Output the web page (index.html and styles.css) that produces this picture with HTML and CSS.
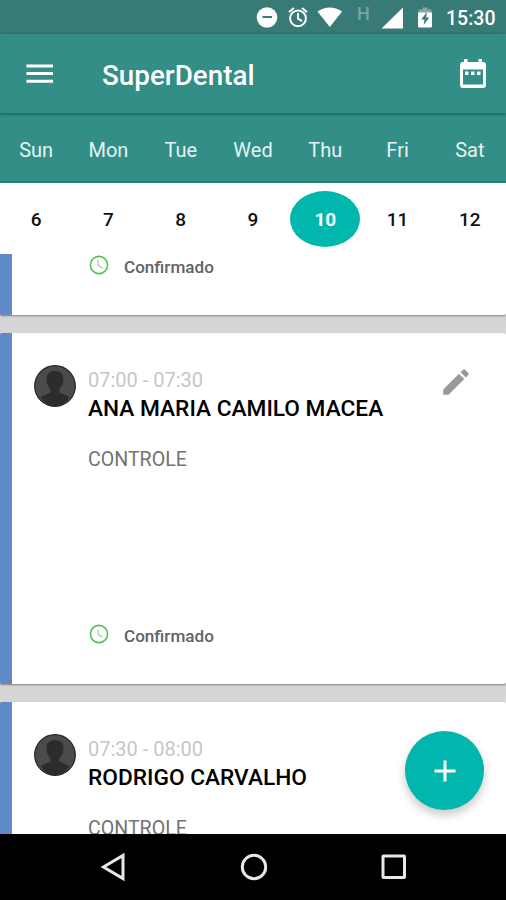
FILE: index.html
```html
<!DOCTYPE html>
<html lang="en">
<head>
<meta charset="utf-8">
<title>SuperDental</title>
<link rel="stylesheet" href="styles.css">
</head>
<body>
<div class="screen">
  <div class="status">
    <svg class="status-icons" width="180" height="34" viewBox="0 0 180 34">
      <circle cx="11" cy="17.500" r="10.300" fill="#fff"/>
      <path d="M6.500 17h9.500" stroke="#377a76" stroke-width="2"/>
      <g fill="none" stroke="#fff" stroke-width="2">
        <circle cx="42" cy="18.300" r="7.900"/>
        <path d="M42 13v5.600l4 2.600M33 12l5-4M51 12l-5-4"/>
      </g>
      <path d="M61.500 11.500Q73.800 3.500 86.100 11.500L73.800 27Z" fill="#fff"/>
      <path d="M147 28.500V7.500L125.500 28.500Z" fill="#fff"/>
      <path d="M166.500 7.500h5v2h4v4h-13v-4h4Z" fill="#83aaa8"/>
      <path d="M162 12.500h14v13.500q0 1.500-1.500 1.500h-11q-1.500 0-1.500-1.500Z" fill="#fff"/>
      <path d="M171 12l-5.800 7.500h3.300l-.8 5.500 5.600-7.500h-3.200Z" fill="#377a76"/>
    </svg>
    <span class="network">H</span>
    <span class="clock">15:30</span>
  </div>
  <header class="appbar">
    <svg class="menu" width="28" height="20" viewBox="0 0 28 20"><path d="M.5 2h26.500M.5 9.600h26.500M.5 17.200h26.500" stroke="#fff" stroke-width="3"/></svg>
    <h1 class="title">SuperDental</h1>
    <svg class="calendar" width="28" height="32" viewBox="0 0 28 32">
      <path fill="#fff" fill-rule="evenodd" d="M5 1h3.500v3h11V1H23v3h1q3 0 3 3v20q0 3-3 3H4q-3 0-3-3V7q0-3 3-3h1ZM4 11.500V26.500h20V11.500Z"/>
      <path fill="#fff" d="M6 13.500h3.500v3.500H6ZM12 13.500h3.500v3.500H12ZM18 13.500h3.500v3.500H18Z"/>
    </svg>
  </header>
  <div class="week days"><span>Sun</span><span>Mon</span><span>Tue</span><span>Wed</span><span>Thu</span><span>Fri</span><span>Sat</span></div>
  <div class="week dates"><span>6</span><span>7</span><span>8</span><span>9</span><span class="selected">10</span><span>11</span><span>12</span></div>
  <main class="list">
    <article class="card tail">
      <div class="state">
        <svg width="20" height="20" viewBox="0 0 20 20" fill="none" stroke="#55c05a"><circle cx="10" cy="10" r="8.600" stroke-width="1.600"/><path d="M9 5.200v5l4.500 3" stroke-width="1.200" stroke="#8fd292"/></svg>
        <span>Confirmado</span>
      </div>
    </article>
    <article class="card">
      <div class="row">
        <svg class="avatar" width="42" height="42" viewBox="0 0 42 42"><circle cx="21" cy="21" r="20.500" fill="#4b4b4b"/><path d="M21 6c5.500 0 8.500 3 8.500 8 0 5-1.500 7.500-4 10v3.500l10 4.500Q30 41 21 41T6.500 32l10-4.500V24c-2.500-2.500-4-5-4-10 0-5 3-8 8.500-8Z" fill="#2c2c2c"/><circle cx="21" cy="21" r="20.300" fill="none" stroke="#272727" stroke-width="1.200"/></svg>
        <div class="info">
          <div class="time">07:00 - 07:30</div>
          <div class="name">ANA MARIA CAMILO MACEA</div>
          <div class="kind">CONTROLE</div>
        </div>
        <svg class="edit" width="34" height="34" viewBox="0 0 24 24"><path fill="#999" d="M3 17.250V21h3.750L17.810 9.940l-3.750-3.750L3 17.250zM20.710 7.040a1 1 0 0 0 0-1.410l-2.340-2.340a1 1 0 0 0-1.410 0l-1.830 1.830 3.750 3.750 1.830-1.830z"/></svg>
      </div>
      <div class="state">
        <svg width="20" height="20" viewBox="0 0 20 20" fill="none" stroke="#55c05a"><circle cx="10" cy="10" r="8.600" stroke-width="1.600"/><path d="M9 5.200v5l4.500 3" stroke-width="1.200" stroke="#8fd292"/></svg>
        <span>Confirmado</span>
      </div>
    </article>
    <article class="card">
      <div class="row">
        <svg class="avatar" width="42" height="42" viewBox="0 0 42 42"><circle cx="21" cy="21" r="20.500" fill="#4b4b4b"/><path d="M21 6c5.500 0 8.500 3 8.500 8 0 5-1.500 7.500-4 10v3.500l10 4.500Q30 41 21 41T6.500 32l10-4.500V24c-2.500-2.500-4-5-4-10 0-5 3-8 8.500-8Z" fill="#2c2c2c"/><circle cx="21" cy="21" r="20.300" fill="none" stroke="#272727" stroke-width="1.200"/></svg>
        <div class="info">
          <div class="time">07:30 - 08:00</div>
          <div class="name">RODRIGO CARVALHO</div>
          <div class="kind">CONTROLE</div>
        </div>
      </div>
    </article>
  </main>
  <button class="fab" aria-label="Add"><svg width="22" height="22" viewBox="0 0 22 22"><path d="M11 .5v21M.5 11h21" stroke="#fff" stroke-width="3"/></svg></button>
  <nav class="nav">
    <svg width="26" height="30" viewBox="0 0 26 30"><path d="M23 3.500v23L3.500 15Z"/></svg>
    <svg width="30" height="30" viewBox="0 0 30 30"><circle cx="15" cy="15" r="11.700"/></svg>
    <svg width="26" height="26" viewBox="0 0 26 26"><rect x="2" y="2" width="21.500" height="21.500" rx=".5"/></svg>
  </nav>
</div>
</body>
</html>
```

FILE: styles.css
```css
* { box-sizing: border-box; }
body { margin: 0; font-family: Roboto, "Liberation Sans", sans-serif; }
svg { display: block; flex: none; }
.screen { position: relative; width: 506px; height: 900px; overflow: hidden; display: flex; flex-direction: column; background: #d8d5d6; }
.status { position: relative; flex: none; height: 34px; background: #377a76; display: flex; align-items: center; justify-content: flex-end; padding-right: 11px; color: #fff; }
.status-icons { margin-right: 10px; }
.network { position: absolute; left: 357px; top: 3px; font-size: 18px; line-height: 21px; font-weight: 500; color: #7ba5a2; }
.clock { font-size: 19.5px; line-height: 34px; padding-top: 4px; font-weight: 500; width: 49px; white-space: nowrap; }
.appbar { position: relative; z-index: 1; flex: none; height: 79px; background: #328e87; display: flex; align-items: center; padding: 0 19px 0 26px; box-shadow: 0 1px 3px rgba(0, 40, 40, .55); }
.menu { margin-top: 1px; }
.title { margin: 4px auto 0 48px; font-size: 27.8px; line-height: 34px; font-weight: 500; color: #fff; }
.week { display: grid; grid-template-columns: repeat(7, 1fr); align-items: center; justify-items: center; flex: none; }
.days { height: 70px; background: #328e87; color: #e3f4f3; font-size: 20px; border-bottom: 2px solid #1b827a; padding-top: 5px; }
.dates { height: 71px; background: #fff; color: #111; font-size: 19px; font-weight: 500; padding-top: 1px; }
.selected { width: 70px; height: 56px; border-radius: 50%; background: #00b6ad; color: #fff; font-weight: 700; display: flex; align-items: center; justify-content: center; }
.list { height: 580px; flex: none; overflow: hidden; display: flex; flex-direction: column; gap: 18px; }
.card { flex: none; height: 350.5px; background: #fff; border-left: 12px solid #6089c8; border-radius: 2px; box-shadow: 0 1px 2px rgba(0, 0, 0, .4); display: flex; flex-direction: column; justify-content: space-between; padding: 32px 33px 36px 22px; }
.tail { height: 61px; padding-top: 0; justify-content: flex-end; border-radius: 0 0 2px 2px; }
.row { display: flex; align-items: flex-start; }
.info { margin-left: 12px; flex: 1; white-space: nowrap; }
.time { font-size: 20px; line-height: 24px; color: #c6c6c6; margin-top: 3px; }
.name { font-size: 22.7px; line-height: 26px; color: #000; font-weight: 500; margin-top: 4px; }
.kind { font-size: 19.6px; line-height: 24px; color: #737373; margin-top: 26px; }
.state { display: flex; align-items: center; gap: 15px; margin-left: 55px; font-size: 17.1px; line-height: 24px; font-weight: 500; color: #626262; }
.state svg { margin-bottom: 4px; }
.fab { position: absolute; left: 405px; top: 731px; width: 79px; height: 79px; padding: 0; border: 0; border-radius: 50%; background: #00b6ad; display: flex; align-items: center; justify-content: center; box-shadow: 0 5px 10px rgba(0, 0, 0, .22); }
.nav { flex: none; height: 66px; background: #000; display: flex; align-items: center; justify-content: space-between; padding: 0 99px 0 100px; }
.nav svg { fill: none; stroke: #e8e8e8; stroke-width: 3; }
```
